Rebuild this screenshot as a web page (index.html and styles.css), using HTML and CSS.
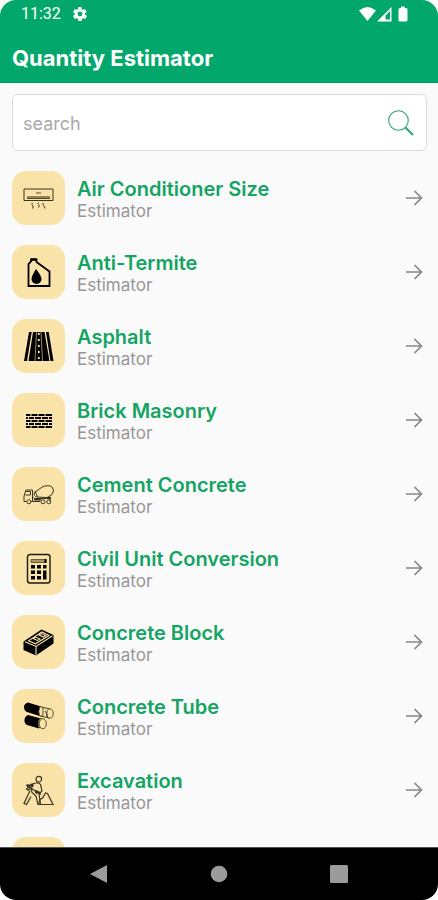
FILE: index.html
```html
<!DOCTYPE html>
<html lang="en">
<head>
<meta charset="utf-8">
<meta name="viewport" content="width=device-width, initial-scale=1">
<title>Quantity Estimator</title>
<link rel="stylesheet" href="styles.css">
</head>
<body>
<svg class="defs" aria-hidden="true">
  <symbol id="arrow" viewBox="0 0 18 18"><path d="M1 9H16M9.500 2L16.500 9L9.500 16" fill="none" stroke="currentColor" stroke-width="1.700"/></symbol>
</svg>
<div class="phone">
  <header class="header">
    <div class="status">
      <span class="time">11:32</span>
      <svg class="gear" viewBox="0 0 24 24" aria-hidden="true"><path fill="currentColor" fill-rule="evenodd" d="M19.400 13a7.500 7.500 0 0 0 0-2l2.300-1.700a.5.5 0 0 0 .1-.7l-2.200-3.700a.5.5 0 0 0-.7-.2l-2.600 1.100a8 8 0 0 0-1.800-1l-.4-2.800a.5.5 0 0 0-.5-.5H9.900a.5.5 0 0 0-.5.500L9 4.800a8 8 0 0 0-1.800 1L4.600 4.700a.5.5 0 0 0-.7.200L1.700 8.600a.5.5 0 0 0 .1.700L4.100 11a7.500 7.500 0 0 0 0 2l-2.300 1.700a.5.5 0 0 0-.1.700l2.200 3.700a.5.5 0 0 0 .7.200l2.600-1.100a8 8 0 0 0 1.800 1l.4 2.800a.5.5 0 0 0 .5.500h4.200a.5.5 0 0 0 .5-.5l.4-2.800a8 8 0 0 0 1.800-1l2.600 1.100a.5.5 0 0 0 .7-.2l2.200-3.700a.5.5 0 0 0-.1-.7zM12 15.600a3.600 3.600 0 1 1 0-7.200 3.600 3.600 0 0 1 0 7.200z"/></svg>
      <svg class="signals" viewBox="0 0 50 16" aria-hidden="true">
        <path fill="currentColor" d="M0 4.500Q8.500-2.500 17 4.500L8.500 15Z"/>
        <path fill="currentColor" fill-rule="evenodd" d="M18 15.500L32.500 1V15.500ZM26.500 13.500H31V5L26.500 9.500Z"/>
        <path fill="currentColor" d="M42 .5h3.500V2H47q1.500 0 1.500 1.500V14q0 1.500-1.500 1.500h-6.500Q39.500 15.500 39.500 14V3.500Q39.500 2 41 2h1z"/>
      </svg>
    </div>
    <h1 class="title">Quantity Estimator</h1>
  </header>
  <form class="search" role="search">
    <input class="search-input" type="text" placeholder="search" aria-label="search">
    <button class="search-button" type="button" aria-label="Search">
      <svg viewBox="0 0 26 26" aria-hidden="true"><circle cx="10.500" cy="10.500" r="9.800" fill="none" stroke="currentColor" stroke-width="1.100"/><path d="M17.500 17.500L25 25" stroke="currentColor" stroke-width="2"/></svg>
    </button>
  </form>
  <main class="list">
    <a class="row" href="#">
      <span class="tile"><svg viewBox="0 0 31 31" aria-hidden="true"><g fill="none" stroke="#3b3421" stroke-width="1"><path d="M1 6h29v11.500H1z"/><path d="M4 14h23" stroke="#94855a" stroke-width="2"/><path d="M4 15.500h23M13 10h5" stroke-width=".9"/><path d="M9.500 20q-1.500 1 0 2.500t0 3M15.500 19.500q-1.500 1 0 2t0 3M20.500 20q-1.500 1 0 2.500t1.500 3"/></g></svg></span>
      <span class="text"><span class="name">Air Conditioner Size</span><span class="kind">Estimator</span></span>
      <svg class="arrow" aria-hidden="true"><use href="#arrow"/></svg>
    </a>
    <a class="row" href="#">
      <span class="tile"><svg viewBox="0 0 31 31" aria-hidden="true"><path d="M5.500 29V7L8 4.500V2.500h5.500V5L26.500 14.500V29Z" fill="none" stroke="#000" stroke-width="1.800"/><path d="M8 2.500h5.500" stroke="#000" stroke-width="2.500"/><path d="M13 12q5.500 7 5.500 10a5 5 0 0 1-10 0Q8.500 19 13 12z"/></svg></span>
      <span class="text"><span class="name">Anti-Termite</span><span class="kind">Estimator</span></span>
      <svg class="arrow" aria-hidden="true"><use href="#arrow"/></svg>
    </a>
    <a class="row" href="#">
      <span class="tile"><svg viewBox="0 0 31 31" aria-hidden="true"><path d="M6 1h2.700L4 30H1zM23 1h2.700L30.500 30H27.500zM10 1h11.500L26.500 30H5.500z"/><path d="M13.500 1L12 30M18 1l1.500 29" stroke="#fae3a8" stroke-width=".6"/><path d="M15.800 2v28" stroke="#fae3a8" stroke-width="1.800" stroke-dasharray="2 4"/></svg></span>
      <span class="text"><span class="name">Asphalt</span><span class="kind">Estimator</span></span>
      <svg class="arrow" aria-hidden="true"><use href="#arrow"/></svg>
    </a>
    <a class="row" href="#">
      <span class="tile"><svg viewBox="0 0 31 31" aria-hidden="true"><g stroke="#000" stroke-width="2.200"><path d="M3 10h4.500M8.500 10h6M15.500 10h6M22.500 10h6.500M3 16h4.500M8.500 16h6M15.500 16h6M22.500 16h6.500M3 22h4.500M8.500 22h6M15.500 22h6M22.500 22h6.500"/><path d="M3 13h2M6 13h5M12 13h6M19 13h6M26 13h3M3 19h2M6 19h5M12 19h6M19 19h6M26 19h3"/></g></svg></span>
      <span class="text"><span class="name">Brick Masonry</span><span class="kind">Estimator</span></span>
      <svg class="arrow" aria-hidden="true"><use href="#arrow"/></svg>
    </a>
    <a class="row" href="#">
      <span class="tile"><svg viewBox="0 0 31 31" aria-hidden="true"><g fill="none" stroke="#3b3421" stroke-width="1"><path d="M3.500 22.500H1V17l2-6h6.500v11.500H8M2.500 16h5v-3.500H3.200M9.500 18l2 1.500h15.500v3M9.500 22.500H17"/><path d="M11.500 13.500L20 7.500Q27 5.500 29.500 8.500T28.500 16L24 18.500 14 18Q10 17 11.500 13.500zM12 12l2.500 5.500"/><circle cx="5.800" cy="22.800" r="2"/><circle cx="20" cy="22.800" r="2"/><circle cx="25.800" cy="22.800" r="2"/></g><path d="M11 19.500h7v2h-7zM24 18h4v2h-4z" fill="#3b3421"/></svg></span>
      <span class="text"><span class="name">Cement Concrete</span><span class="kind">Estimator</span></span>
      <svg class="arrow" aria-hidden="true"><use href="#arrow"/></svg>
    </a>
    <a class="row" href="#">
      <span class="tile"><svg viewBox="0 0 31 31" aria-hidden="true"><rect x="4.500" y="1.500" width="22.500" height="28.500" rx="2.500" fill="none" stroke="#1d1a10" stroke-width="1.400"/><path d="M8 6.500h15v3H8z" fill="#a99766" stroke="#3b3421" stroke-width=".7"/><path d="M21.500 6h2v4h-2zM8 12h4v3.500H8zM14 12h4v3.500h-4zM20 12h3.500v3.500H20zM8 17.500h4V21H8zM14 17.500h4V21h-4zM8 23h4v3.500H8zM14 23h4v3.500h-4zM20 17.500h3.500v9H20z"/></svg></span>
      <span class="text"><span class="name">Civil Unit Conversion</span><span class="kind">Estimator</span></span>
      <svg class="arrow" aria-hidden="true"><use href="#arrow"/></svg>
    </a>
    <a class="row" href="#">
      <span class="tile"><svg viewBox="0 0 31 31" aria-hidden="true"><path d="M.500 14.500L18.500 2.500 30.500 8v8.500L13 28.500.500 23z"/><g fill="none" stroke="#fae3a8" stroke-width="1.100"><path d="M2 14.800L13 19.500 29.500 8.700M13 19.500V28M5.500 13.800L12.500 16.800 26 8.500 18.800 5z"/><path d="M10 11.500l4.500 2 2.500-1.500-4.500-2zM16 8l4.500 2 2.200-1.500-4.200-2z"/></g></svg></span>
      <span class="text"><span class="name">Concrete Block</span><span class="kind">Estimator</span></span>
      <svg class="arrow" aria-hidden="true"><use href="#arrow"/></svg>
    </a>
    <a class="row" href="#">
      <span class="tile"><svg viewBox="0 0 31 31" aria-hidden="true"><path d="M5 1.500l13 4-1.500 9.500L4 11Q1 9.500 1 6T5 1.500zM5 14l13 3.500-2 10L4 24Q1 22 1.500 18.500T5 14z"/><path d="M18 6l9 2-1 9-8-2z" fill="#fae3a8" stroke="#3b3421" stroke-width="1"/><g fill="#fae3a8" stroke="#5a5036" stroke-width="1"><path d="M17 5.500l3 1v7.500l-3 1.500q-2.500-5 0-10z"/><ellipse cx="27" cy="12.500" rx="3.200" ry="4.600"/><path d="M17 17.500l3 .5v9l-4-.5q-2-5 1-9z"/><ellipse cx="19.800" cy="22.700" rx="3.500" ry="5"/></g><path d="M22 10l2 3v3" fill="none" stroke="#3b3421"/></svg></span>
      <span class="text"><span class="name">Concrete Tube</span><span class="kind">Estimator</span></span>
      <svg class="arrow" aria-hidden="true"><use href="#arrow"/></svg>
    </a>
    <a class="row" href="#">
      <span class="tile"><svg viewBox="0 0 31 31" aria-hidden="true"><g fill="none" stroke="#3b3421" stroke-width="1.200"><circle cx="15.800" cy="4.200" r="2.800"/><path d="M13.500 8Q7 8.500 3.500 14l2 1.500L8 12.500l1 5L13 21l2 8.500h2.500L16 19l-2.500-3 4 1.500 1.500-2-1.500-6Q16 7.500 13.500 8zM7 16L4.500 21 1 28.500l2.500 1L8 21.500M3 10l15 9.500"/><path d="M15.500 29.500H30L24.500 18.500 22.500 18l-3 5-2.500 1.500z"/></g><path d="M8 8.500l3 1-1 3-3-1zM4 9l4 1-3 4zM12 15l3 1-1 3-2-1z" fill="#3b3421"/></svg></span>
      <span class="text"><span class="name">Excavation</span><span class="kind">Estimator</span></span>
      <svg class="arrow" aria-hidden="true"><use href="#arrow"/></svg>
    </a>
    <a class="row" href="#">
      <span class="tile"></span>
      <span class="text"><span class="name">Flooring</span><span class="kind">Estimator</span></span>
      <svg class="arrow" aria-hidden="true"><use href="#arrow"/></svg>
    </a>
  </main>
  <nav class="nav" aria-label="System">
    <button class="nav-button" type="button" aria-label="Back"><svg viewBox="0 0 18 18" aria-hidden="true"><path fill="currentColor" d="M0 9L17 0V18Z"/></svg></button>
    <button class="nav-button" type="button" aria-label="Home"><svg viewBox="0 0 18 18" aria-hidden="true"><circle cx="9" cy="9" r="8.300" fill="currentColor"/></svg></button>
    <button class="nav-button" type="button" aria-label="Recent apps"><svg viewBox="0 0 18 18" aria-hidden="true"><rect width="18" height="18" rx="1.500" fill="currentColor"/></svg></button>
  </nav>
</div>
</body>
</html>
```
FILE: styles.css
```css
* { box-sizing: border-box; }

body {
  margin: 0;
  background: #fff;
  font-family: Inter, "Liberation Sans", sans-serif;
}

svg { display: block; }

.defs { position: absolute; width: 0; height: 0; }

.phone {
  display: flex;
  flex-direction: column;
  height: 100vh;
  overflow: hidden;
  border-radius: 16px;
  background: #fafafa;
}

.header {
  flex: none;
  background: #02a86b;
  color: #fff;
  border-bottom: 1px solid #06965f;
}

.status {
  display: flex;
  align-items: center;
  height: 28px;
  padding: 0 29px 0 21px;
}

.time {
  font: 400 16px/20px Roboto, sans-serif;
}

.gear { width: 16px; height: 16px; margin-left: 11px; }

.signals { width: 50px; height: 16px; margin-left: auto; }

.title {
  margin: 0;
  padding: 16px 12px 10px;
  font-size: 22px;
  line-height: 28px;
  font-weight: 700;
}

.search {
  flex: none;
  display: flex;
  align-items: center;
  height: 57px;
  margin: 11px 11px 20px 12px;
  padding: 0 12px 0 10px;
  border: 1px solid #dcdadd;
  border-radius: 6px;
  background: #fff;
}

.search-input {
  flex: 1;
  min-width: 0;
  padding: 2px 0 0;
  border: 0;
  outline: 0;
  background: none;
  color: #444;
  font: 400 18px/24px Inter, sans-serif;
}

.search-input::placeholder { color: #a8a8a8; opacity: 1; }

.search-button {
  width: 26px;
  height: 26px;
  padding: 0;
  border: 0;
  background: none;
  color: #2aa574;
}

.list {
  flex: 1;
  min-height: 0;
  display: flex;
  flex-direction: column;
  gap: 20px;
  padding: 0 15px 20px 12px;
  overflow-y: auto;
  scrollbar-width: none;
}

.row {
  flex: none;
  display: flex;
  align-items: center;
  gap: 12px;
  color: inherit;
  text-decoration: none;
}

.tile {
  flex: none;
  display: grid;
  place-items: center;
  width: 53px;
  height: 54px;
  border-radius: 14px;
  background: #fae3a8;
}

.tile svg { width: 31px; height: 31px; }

.text {
  flex: 1;
  align-self: flex-start;
  display: flex;
  flex-direction: column;
  padding-top: 6px;
}

.name {
  color: #14a463;
  font-size: 20px;
  line-height: 24px;
  font-weight: 600;
}

.kind {
  color: #979797;
  font-size: 17px;
  line-height: 20px;
}

.arrow { flex: none; width: 18px; height: 18px; color: #858585; }

.nav {
  flex: none;
  display: flex;
  height: 53px;
  padding: 0 39px;
  border-top: 1px solid #555;
  background: #000;
}

.nav-button {
  flex: 1;
  display: grid;
  place-items: center;
  border: 0;
  background: none;
  color: #9b9b9b;
}

.nav-button svg { width: 18px; height: 18px; }
```
